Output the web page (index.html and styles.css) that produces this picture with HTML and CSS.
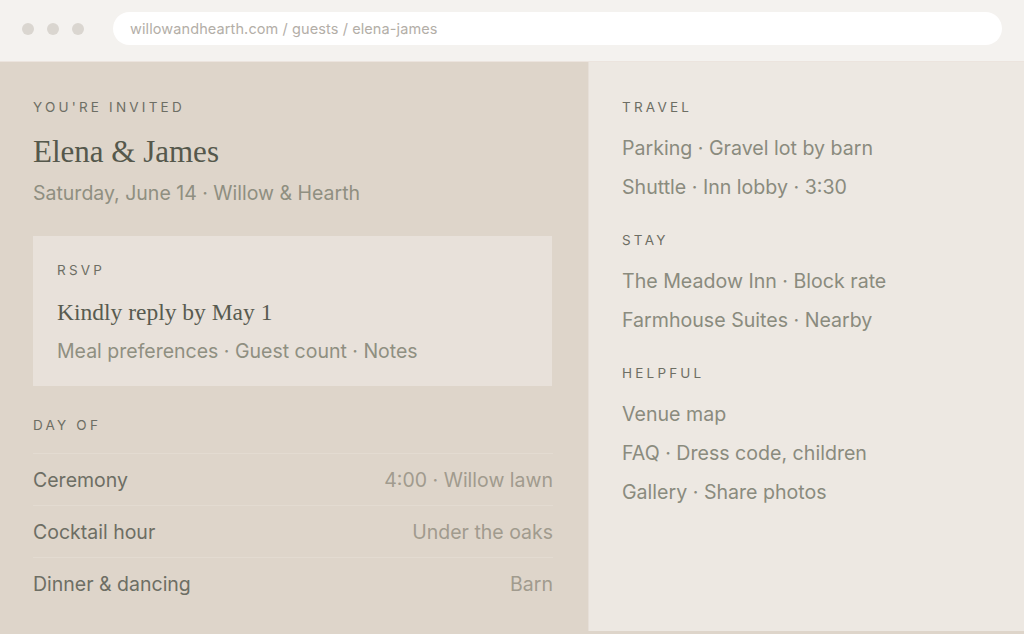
FILE: index.html
```html
<!DOCTYPE html>
<html lang="en">
<head>
<meta charset="utf-8">
<title>Elena &amp; James</title>
<link rel="stylesheet" href="styles.css">
</head>
<body>
<header class="chrome">
  <div class="dots"><span class="dot"></span><span class="dot"></span><span class="dot"></span></div>
  <div class="url">willowandhearth.com / guests / elena-james</div>
</header>
<main class="page">
  <section class="invite">
    <div class="label">YOU'RE INVITED</div>
    <h1 class="names">Elena &amp; James</h1>
    <div class="sub">Saturday, June 14 · Willow &amp; Hearth</div>
    <div class="card">
      <div class="label">RSVP</div>
      <div class="card-title">Kindly reply by May 1</div>
      <div class="sub">Meal preferences · Guest count · Notes</div>
    </div>
    <div class="label dayof">DAY OF</div>
    <ul class="rows">
      <li class="row"><span class="row-name">Ceremony</span><span class="row-val">4:00 · Willow lawn</span></li>
      <li class="row"><span class="row-name">Cocktail hour</span><span class="row-val">Under the oaks</span></li>
      <li class="row"><span class="row-name">Dinner &amp; dancing</span><span class="row-val">Barn</span></li>
    </ul>
  </section>
  <aside class="side">
    <div class="group">
      <div class="label">TRAVEL</div>
      <div class="item">Parking · Gravel lot by barn</div>
      <div class="item">Shuttle · Inn lobby · 3:30</div>
    </div>
    <div class="group">
      <div class="label">STAY</div>
      <div class="item">The Meadow Inn · Block rate</div>
      <div class="item">Farmhouse Suites · Nearby</div>
    </div>
    <div class="group">
      <div class="label">HELPFUL</div>
      <div class="item">Venue map</div>
      <div class="item">FAQ · Dress code, children</div>
      <div class="item">Gallery · Share photos</div>
    </div>
  </aside>
</main>
</body>
</html>
```

FILE: styles.css
```css
* { box-sizing: border-box; }
html, body { margin: 0; padding: 0; }
body {
  width: 1024px;
  height: 634px;
  overflow: hidden;
  font-family: Inter, "Liberation Sans", sans-serif;
  background: #ded5ca;
}
.chrome {
  height: 62px;
  background: #f4f2ef;
  border-bottom: 1px solid #ece4de;
  display: flex;
  align-items: center;
  padding: 0 22px 4px 22px;
  gap: 29px;
}
.dots { display: flex; gap: 13px; }
.dot {
  width: 12px; height: 12px; border-radius: 50%;
  background: #dad6d0;
}
.url {
  flex: 1;
  height: 33px;
  background: #ffffff;
  border-radius: 17px;
  display: flex;
  align-items: center;
  padding-left: 17px;
  font-size: 14.5px;
  color: #b3aea7;
  letter-spacing: 0.1px;
}
.page {
  display: flex;
  height: 572px;
}
.invite {
  width: 588px;
  padding: 37px 35px 0 33px;
}
.label {
  font-size: 13.5px;
  line-height: 16px;
  letter-spacing: 3.2px;
  color: #6d6e64;
}
.names {
  margin: 17px 0 0;
  font-family: "Liberation Serif", serif;
  font-weight: 400;
  font-size: 31px;
  line-height: 40px;
  color: #55584c;
}
.sub {
  font-size: 19.5px;
  line-height: 24px;
  color: #8f8f81;
  margin-top: 9px;
}
.card {
  margin-top: 31px;
  margin-right: 1px;
  background: #e8e1da;
  padding: 26px 24px 25px 24px;
  height: 150px;
}
.card-title {
  margin-top: 19px;
  font-family: "Liberation Serif", serif;
  font-size: 23.5px;
  line-height: 30px;
  color: #585b50;
}
.card .sub { margin-top: 12px; }
.dayof { margin-top: 31px; }
.rows {
  list-style: none;
  margin: 20px 0 0;
  padding: 0;
}
.row {
  display: flex;
  justify-content: space-between;
  align-items: center;
  height: 52px;
  border-top: 1px solid #e3dbd1;
  font-size: 19.5px;
}
.row-name { color: #6d6e64; }
.row-val { color: #a19b8e; }
.side {
  flex: 1;
  background: #ede8e2;
  border-left: 1px solid #e6dfd8;
  height: 569px;
  padding: 37px 33px;
}
.group + .group { margin-top: 25px; }
.group .label { margin-bottom: 14px; }
.item {
  font-size: 19.6px;
  line-height: 39px;
  color: #8a8b7e;
}
```
